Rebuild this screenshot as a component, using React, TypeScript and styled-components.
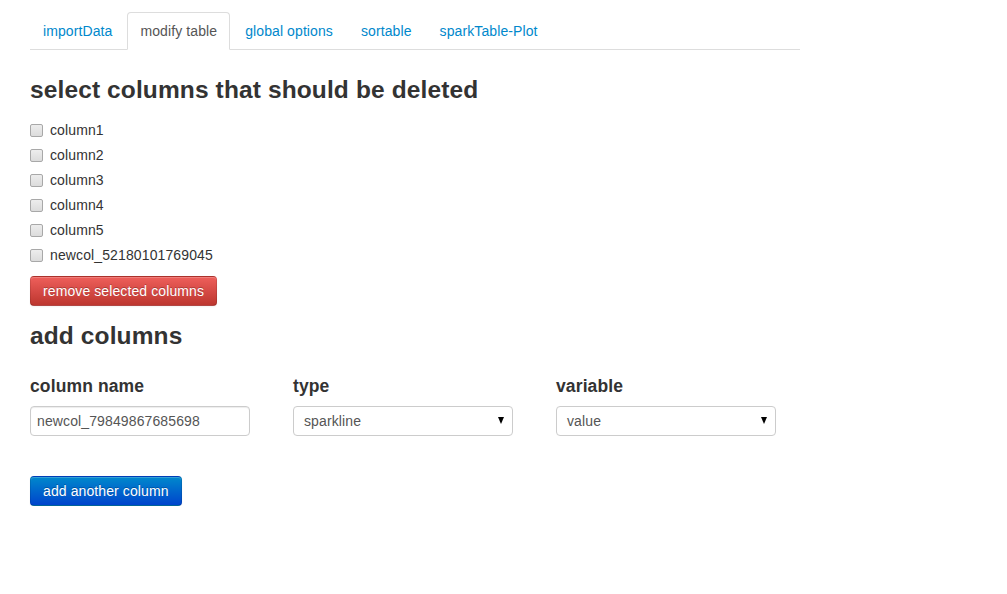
import React from "react";
import styled, { createGlobalStyle } from "styled-components";

const Global = createGlobalStyle`
  html, body { margin: 0; padding: 0; background: #fff; }
  body {
    font-family: "Liberation Sans", Arial, sans-serif;
    font-size: 14px;
    line-height: 20px;
    color: #333;
    letter-spacing: 0.12px;
  }
`;

const Page = styled.div`
  width: 770px;
  padding: 12px 0 0 30px;
`;

const Tabs = styled.ul`
  display: flex;
  list-style: none;
  margin: 0 0 20px;
  padding: 0;
  border-bottom: 1px solid #ddd;
`;

const Tab = styled.li<{ $active?: boolean }>`
  margin-right: 2px;
  margin-bottom: -1px;
  padding: 8px 12px;
  line-height: 20px;
  border: 1px solid ${(p) => (p.$active ? "#ddd" : "transparent")};
  border-bottom-color: transparent;
  background: ${(p) => (p.$active ? "#fff" : "transparent")};
  border-radius: 4px 4px 0 0;
  color: ${(p) => (p.$active ? "#555" : "#0088cc")};
  letter-spacing: 0.1px;
  cursor: pointer;
`;

const H3 = styled.h3<{ $top?: number }>`
  margin: ${(p) => p.$top ?? 0}px 0 10px;
  font-size: 24.5px;
  line-height: 40px;
  font-weight: bold;
`;

const CheckList = styled.div`
  display: flex;
  flex-direction: column;
  gap: 5px;
  margin-bottom: 10.5px;
`;

const CheckRow = styled.label`
  display: flex;
  align-items: center;
  height: 20px;
  gap: 7px;
`;

const Box = styled.span`
  width: 11px;
  height: 11px;
  border: 1px solid #a8a8a8;
  border-radius: 2px;
  background: linear-gradient(#ededed, #dcdcdc);
  box-sizing: content-box;
`;

const Btn = styled.button<{ $kind: "danger" | "primary" }>`
  display: inline-block;
  height: 30px;
  padding: 4px 12px;
  font-family: "Liberation Sans", Arial, sans-serif;
  font-size: 14px;
  line-height: 20px;
  letter-spacing: 0.1px;
  color: #fff;
  text-shadow: 0 -1px 0 rgba(0, 0, 0, 0.25);
  border: 1px solid;
  border-color: rgba(0, 0, 0, 0.1) rgba(0, 0, 0, 0.1) rgba(0, 0, 0, 0.25);
  border-radius: 4px;
  box-shadow: inset 0 1px 0 rgba(255, 255, 255, 0.2), 0 1px 2px rgba(0, 0, 0, 0.05);
  background-image: ${(p) =>
    p.$kind === "danger"
      ? "linear-gradient(#ee5f5b, #bd362f)"
      : "linear-gradient(#0088cc, #0044cc)"};
  cursor: pointer;
`;

const Fields = styled.div`
  display: grid;
  grid-template-columns: 263px 263px 263px;
  margin-top: 20px;
`;

const Field = styled.div`
  display: flex;
  flex-direction: column;
`;

const H4 = styled.h4`
  margin: 0 0 10px;
  font-size: 17.5px;
  line-height: 20px;
  font-weight: bold;
`;

const Input = styled.div`
  box-sizing: border-box;
  width: 220px;
  height: 30px;
  padding: 4px 6px;
  border: 1px solid #ccc;
  border-radius: 4px;
  box-shadow: inset 0 1px 1px rgba(0, 0, 0, 0.075);
  color: #555;
  font-size: 14px;
  line-height: 20px;
`;

const Select = styled.div`
  box-sizing: border-box;
  width: 220px;
  height: 30px;
  padding: 4px 8px 4px 10px;
  border: 1px solid #ccc;
  border-radius: 4px;
  color: #555;
  display: flex;
  align-items: center;
  justify-content: space-between;
`;

const Arrow = styled.span`
  width: 0;
  height: 0;
  border-left: 3.5px solid transparent;
  border-right: 3.5px solid transparent;
  border-top: 7px solid #000;
`;

const Footer = styled.div`
  margin-top: 40px;
`;

const cols = ["column1", "column2", "column3", "column4", "column5", "newcol_52180101769045"];

export default function App() {
  return (
    <Page>
      <Global />
      <Tabs>
        <Tab>importData</Tab>
        <Tab $active>modify table</Tab>
        <Tab>global options</Tab>
        <Tab>sortable</Tab>
        <Tab>sparkTable-Plot</Tab>
      </Tabs>
      <H3>select columns that should be deleted</H3>
      <CheckList>
        {cols.map((c) => (
          <CheckRow key={c}>
            <Box />
            {c}
          </CheckRow>
        ))}
      </CheckList>
      <Btn $kind="danger">remove selected columns</Btn>
      <H3 $top={10}>add columns</H3>
      <Fields>
        <Field>
          <H4>column name</H4>
          <Input>newcol_79849867685698</Input>
        </Field>
        <Field>
          <H4>type</H4>
          <Select>
            sparkline
            <Arrow />
          </Select>
        </Field>
        <Field>
          <H4>variable</H4>
          <Select>
            value
            <Arrow />
          </Select>
        </Field>
      </Fields>
      <Footer>
        <Btn $kind="primary">add another column</Btn>
      </Footer>
    </Page>
  );
}
